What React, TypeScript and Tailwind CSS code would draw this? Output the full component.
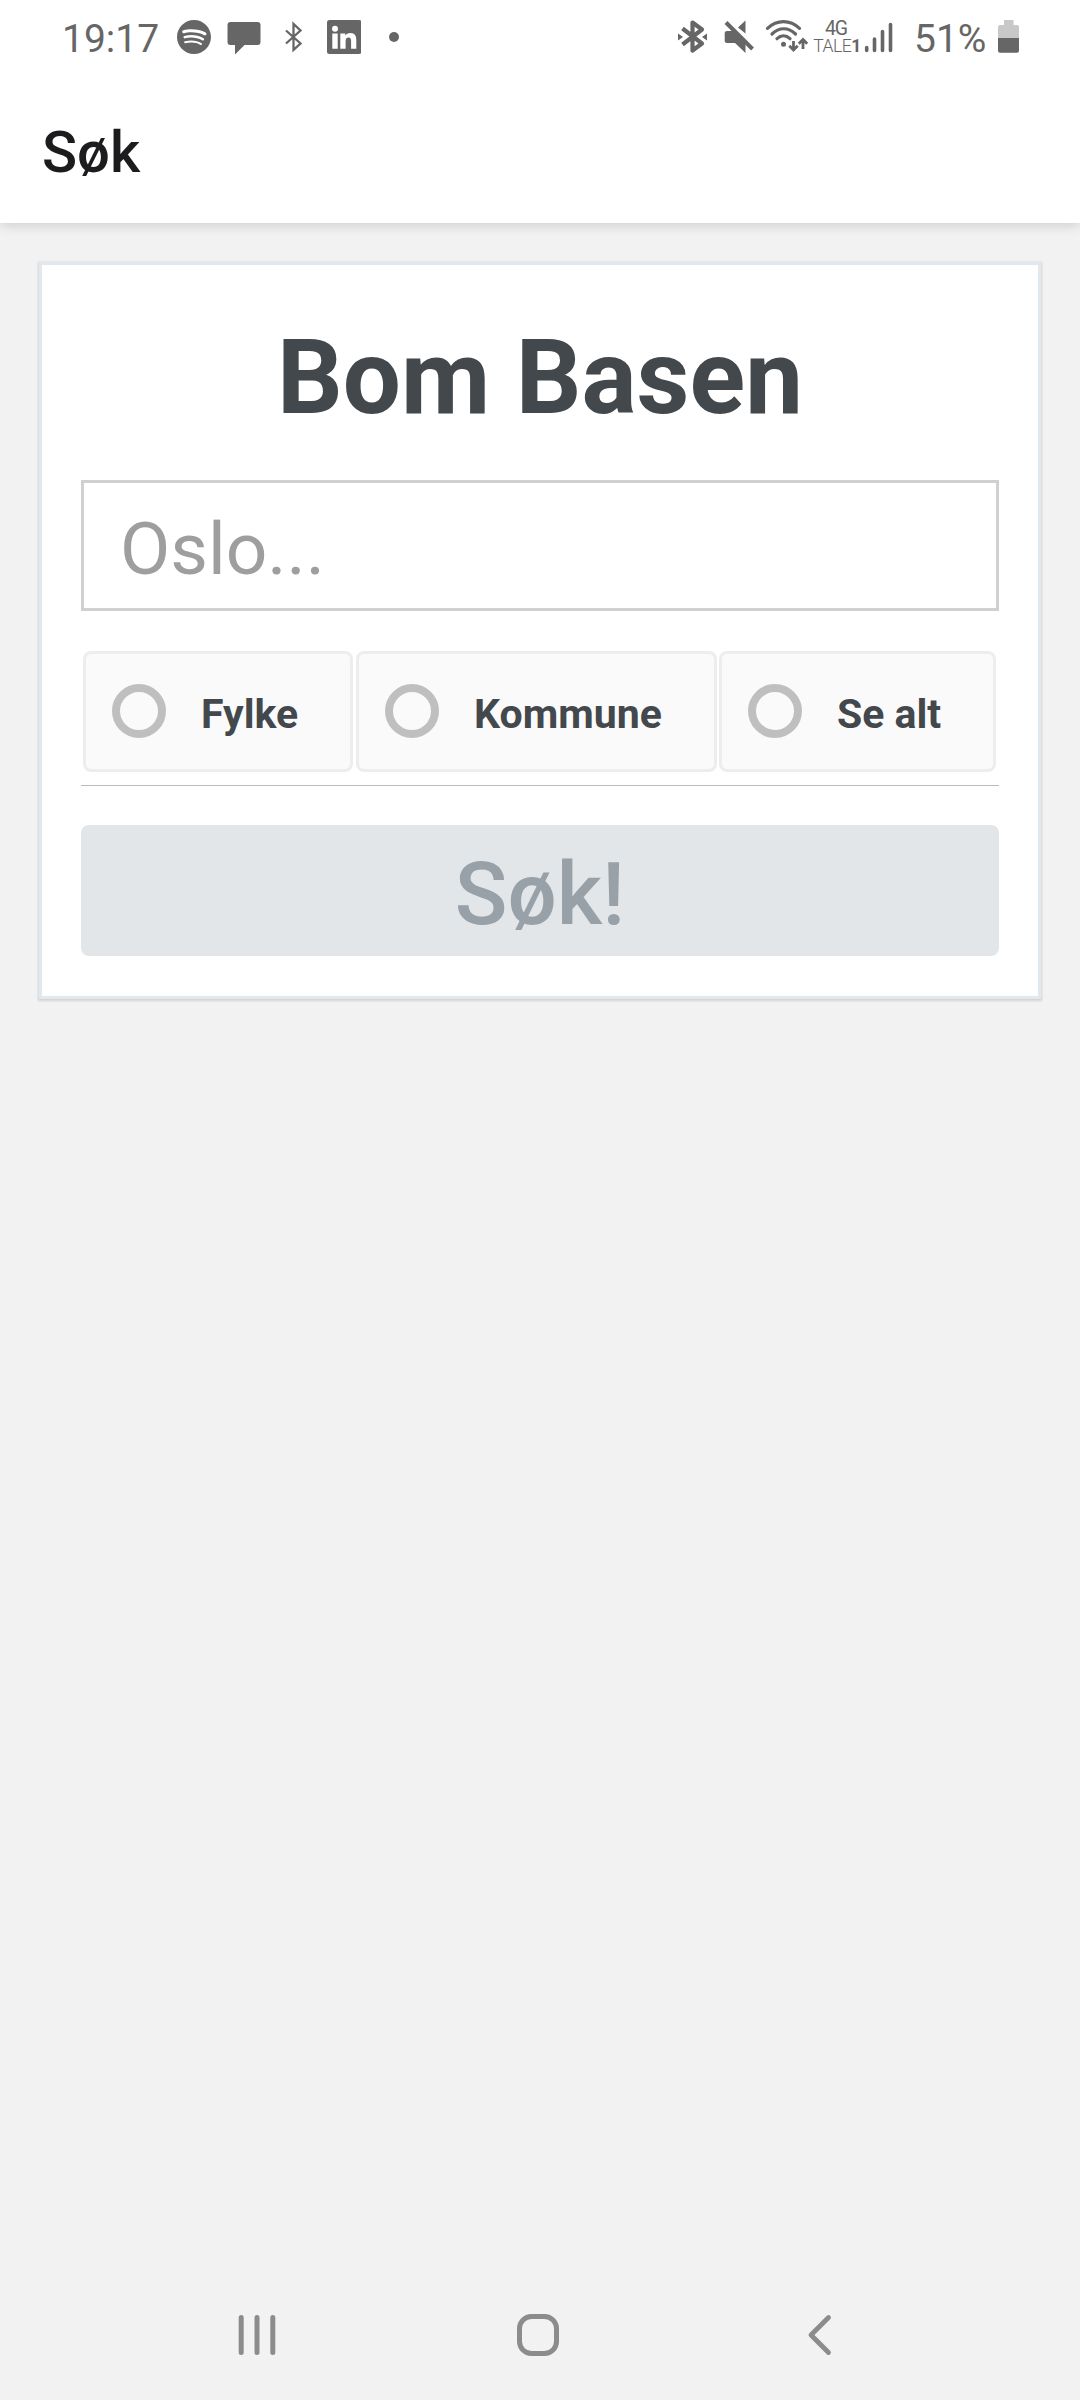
import type { ReactNode } from 'react'
import { SiSpotify } from 'react-icons/si'

// Each status icon is drawn in screen coordinates and cropped by its viewBox.
function Glyph({ box, className, children }: { box: [number, number, number, number]; className?: string; children: ReactNode }) {
  return (
    <svg width={box[2]} height={box[3]} viewBox={box.join(' ')} className={'shrink-0 ' + (className ?? '')} fill="none">
      {children}
    </svg>
  )
}

const INK = '#666666'

function StatusBar() {
  return (
    <div className="flex h-[75px] items-start text-[#666666]">
      <span className="ml-[62px] mt-[18px] w-[115px] whitespace-nowrap text-[39px] leading-[42px]">19:17</span>
      <SiSpotify size={34} className="mt-5 shrink-0" />
      <Glyph box={[227, 20, 34, 35]} className="ml-4 mt-5">
        <path fill={INK} d="M230.500 22H257.500Q260.500 22 260.500 25V42Q260.500 45 257.500 45H244.500L235 54.500V45H230.500Q227.500 45 227.500 42V25Q227.500 22 230.500 22Z" />
      </Glyph>
      <Glyph box={[283, 20, 22, 34]} className="ml-[22px] mt-5">
        <path stroke={INK} strokeWidth="2.3" d="M286 30.500L300.500 43.500L293.500 49.800V24L300.500 30.500L286 43.500" />
      </Glyph>
      <Glyph box={[327, 20, 34, 34]} className="ml-[22px] mt-5">
        <rect x="327" y="20" width="34.500" height="34" rx="2.500" fill={INK} />
        <circle cx="335" cy="28.700" r="3" fill="#fff" />
        <path fill="#fff" d="M332.300 33.500H337.700V48.700H332.300ZM340.300 33.500H345.300V35.500C346.300 34 348 33.100 350.400 33.100C355 33.100 356.300 36 356.300 40V48.700H351.100V41C351.100 39 350.500 37.400 348.600 37.400C346.500 37.400 345.600 39 345.600 41V48.700H340.300Z" />
      </Glyph>
      <Glyph box={[388, 31, 12, 12]} className="ml-[27px] mt-[31px]">
        <circle cx="394" cy="37" r="5" fill={INK} />
      </Glyph>
      <Glyph box={[677, 19, 32, 36]} className="ml-[277px] mt-[19px]">
        <path stroke={INK} strokeWidth="4.200" strokeLinejoin="round" d="M682.500 28.500L702 43.500L692.500 50.500V22.500L702 29.500L682.500 44.500" />
        <path fill={INK} d="M678 33.500L683 37L678 40.500ZM707 33.500L702 37L707 40.500Z" />
      </Glyph>
      <Glyph box={[724, 19, 31, 36]} className="ml-[15px] mt-[19px]">
        <path fill={INK} d="M727 31H733L745.500 44V53L735 43H727Q724.700 43 724.700 41V33Q724.700 31 727 31ZM745.500 20.500V33.500L738 27.500Z" />
        <path stroke="#fff" strokeWidth="2" d="M728.300 20L754.500 46.500" />
        <path stroke={INK} strokeWidth="4" d="M726 22.500L752.500 49" />
      </Glyph>
      <Glyph box={[764, 19, 46, 36]} className="ml-[9px] mt-[19px]">
        <path stroke={INK} strokeWidth="3.200" strokeLinecap="round" d="M767.500 28.300C777 19.300 790 19.300 799.500 28.300M772 34C779 27 788.500 27 795.500 34M777 38.700C781 35 786 35 790 38.700" />
        <circle cx="783.500" cy="44.200" r="2.500" fill={INK} />
        <path stroke={INK} strokeWidth="2.800" d="M793.500 41V50M789.300 45.800L793.500 50L797.700 45.800M803 49V39.500M798.800 43.700L803 39.500L807.200 43.700" />
      </Glyph>
      <div className="ml-[4px] mt-5 flex w-[46px] shrink-0 flex-col items-center">
        <span className="ml-[-2px] mt-[1px] text-[19.500px] leading-[16px] tracking-[-1px]">4G</span>
        <span className="whitespace-nowrap text-[17.500px] font-light leading-[19px] tracking-[-0.5px]">
          TALE<b className="font-bold">1</b>
        </span>
      </div>
      <Glyph box={[864, 20, 30, 34]} className="ml-1 mt-5">
        <path stroke={INK} strokeWidth="3.600" strokeLinecap="round" d="M866.700 47.500V50.500M874.500 39V50.500M882.500 31.500V50.500M890.500 24.500V50.500" />
      </Glyph>
      <span className="ml-[20px] mt-[18px] w-[84px] shrink-0 whitespace-nowrap text-[39px] leading-[42px]">51%</span>
      <Glyph box={[998, 20, 21, 33]} className="mt-5">
        <path fill="#c8c8c8" d="M1004 20H1013.500V25H1017Q1019 25 1019 27V38H998V27Q998 25 1000 25H1004Z" />
        <path fill={INK} d="M998 38H1019V50.500Q1019 52.700 1017 52.700H1000Q998 52.700 998 50.500Z" />
      </Glyph>
    </div>
  )
}

function Choice({ label, className }: { label: string; className: string }) {
  return (
    <label className={'flex h-[121px] items-center rounded-[8px] border-[3px] border-[#ededed] bg-[#fafafa] pl-[26px] ' + className}>
      <span className="mb-[1px] size-[54px] shrink-0 rounded-full border-[8px] border-[#bfbfbf]" />
      <span className="ml-[35px] mt-[5px] whitespace-nowrap text-[41px] font-bold leading-[50px]">{label}</span>
    </label>
  )
}

export default function App() {
  return (
    <div className="flex h-[2400px] w-[1080px] flex-col overflow-hidden bg-[#f2f2f2] font-[Roboto,sans-serif] text-[#43484d]">
      <header className="h-[223px] shrink-0 bg-white shadow-[0_2px_12px_rgba(0,0,0,0.16)]">
        <StatusBar />
        <h1 className="ml-[42px] mt-[42px] text-[58px] font-medium leading-[70px] text-[#1c1c1e]">Søk</h1>
      </header>

      <main className="mx-[39px] mt-[39px] h-[737px] shrink-0 border-[3px] border-[#e1e8ee] bg-white px-[39px] shadow-[0_1px_2px_1px_rgba(0,0,0,0.13)]">
        <h2 className="mt-[53px] text-center text-[103px] font-bold leading-[120px]">Bom Basen</h2>
        <div className="mt-[42px] flex h-[131px] items-center border-[3px] border-[#d0d0d0] pl-[36px] pt-[6px] text-[73px] leading-[90px] text-[#9e9e9e]">
          Oslo...
        </div>
        <div className="mt-10 flex h-[135px] border-b border-[#bbbbbb] pl-[2px]">
          <Choice label="Fylke" className="w-[270px]" />
          <Choice label="Kommune" className="ml-[3px] w-[361px]" />
          <Choice label="Se alt" className="ml-[2px] w-[277px]" />
        </div>
        <button className="mt-[39px] block h-[131px] w-full rounded-[8px] bg-[#e2e6e9] pt-[6px] text-center text-[87px] font-medium leading-[100px] text-[#99a1a8]">
          Søk!
        </button>
      </main>

      <nav className="mt-auto flex h-[130px] shrink-0 items-center pl-[236px]">
        <Glyph box={[236, 2312, 42, 46]}>
          <path stroke="#8c8c8c" strokeWidth="5" strokeLinecap="round" d="M241.200 2317.500V2352.500M257 2317.500V2352.500M272.800 2317.500V2352.500" />
        </Glyph>
        <Glyph box={[515, 2312, 46, 46]} className="ml-[237px]">
          <rect x="519.500" y="2316.500" width="37" height="37" rx="12" stroke="#8c8c8c" strokeWidth="5" />
        </Glyph>
        <Glyph box={[805, 2312, 30, 46]} className="ml-[244px]">
          <path stroke="#8c8c8c" strokeWidth="4.800" strokeLinecap="round" strokeLinejoin="round" d="M828.500 2317.500L811 2335L828.500 2352.500" />
        </Glyph>
      </nav>
    </div>
  )
}
